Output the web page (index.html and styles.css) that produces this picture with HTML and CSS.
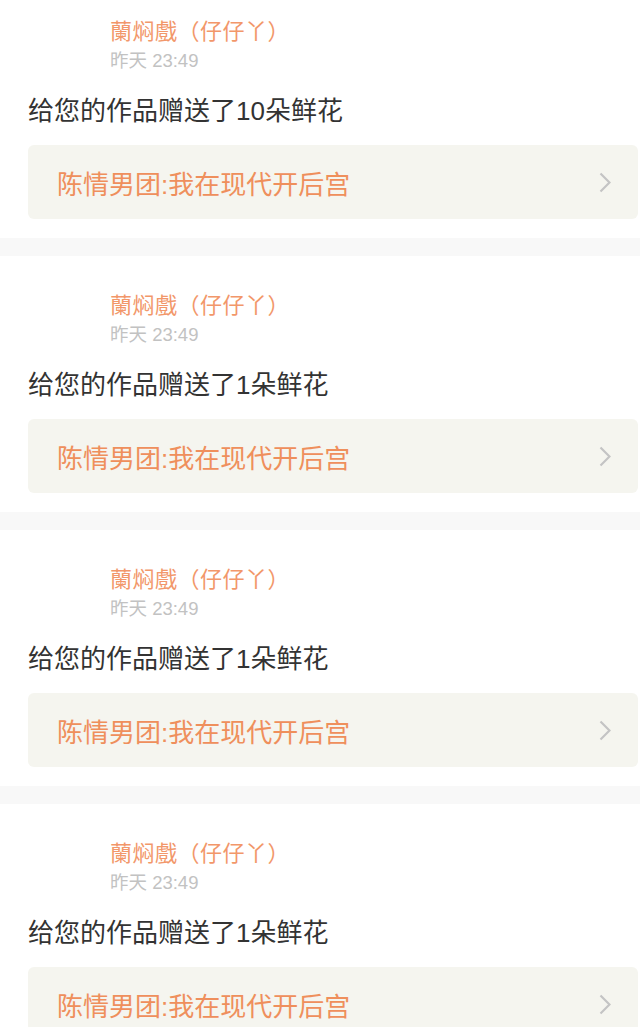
FILE: index.html
```html
<!DOCTYPE html>
<html lang="zh-CN">
<head>
    <meta charset="UTF-8">
    <meta name="viewport" content="width=device-width, initial-scale=1.0">
    <title>消息</title>
    <link rel="stylesheet" href="styles.css">
</head>
<body>
    <main class="list">
        <section class="item">
            <div class="item-head">
                <div class="user-name">蘭焖戲（仔仔丫）</div>
                <div class="time">昨天 23:49</div>
            </div>
            <p class="message">给您的作品赠送了10朵鲜花</p>
            <a class="work" href="#">
                <span class="work-title">陈情男团:我在现代开后宫</span>
                <svg class="arrow" width="12" height="21" viewBox="0 0 12 21"><path d="M1.5 1.5 L10.5 10.5 L1.5 19.5" fill="none" stroke="#c4c4c4" stroke-width="2.2"/></svg>
            </a>
        </section>

        <section class="item">
            <div class="item-head">
                <div class="user-name">蘭焖戲（仔仔丫）</div>
                <div class="time">昨天 23:49</div>
            </div>
            <p class="message">给您的作品赠送了1朵鲜花</p>
            <a class="work" href="#">
                <span class="work-title">陈情男团:我在现代开后宫</span>
                <svg class="arrow" width="12" height="21" viewBox="0 0 12 21"><path d="M1.5 1.5 L10.5 10.5 L1.5 19.5" fill="none" stroke="#c4c4c4" stroke-width="2.2"/></svg>
            </a>
        </section>

        <section class="item">
            <div class="item-head">
                <div class="user-name">蘭焖戲（仔仔丫）</div>
                <div class="time">昨天 23:49</div>
            </div>
            <p class="message">给您的作品赠送了1朵鲜花</p>
            <a class="work" href="#">
                <span class="work-title">陈情男团:我在现代开后宫</span>
                <svg class="arrow" width="12" height="21" viewBox="0 0 12 21"><path d="M1.5 1.5 L10.5 10.5 L1.5 19.5" fill="none" stroke="#c4c4c4" stroke-width="2.2"/></svg>
            </a>
        </section>

        <section class="item">
            <div class="item-head">
                <div class="user-name">蘭焖戲（仔仔丫）</div>
                <div class="time">昨天 23:49</div>
            </div>
            <p class="message">给您的作品赠送了1朵鲜花</p>
            <a class="work" href="#">
                <span class="work-title">陈情男团:我在现代开后宫</span>
                <svg class="arrow" width="12" height="21" viewBox="0 0 12 21"><path d="M1.5 1.5 L10.5 10.5 L1.5 19.5" fill="none" stroke="#c4c4c4" stroke-width="2.2"/></svg>
            </a>
        </section>
    </main>
</body>
</html>
```

FILE: styles.css
```css
body {
    margin: 0;
    padding: 0;
    background-color: #f8f8f8;
    font-family: "Liberation Sans", "Noto Sans CJK SC", sans-serif;
    color: #333;
    overflow: hidden;
}

/* page is scrolled a little, first card is cut at the top */
.list {
    margin-top: -18px;
    display: flex;
    flex-direction: column;
    gap: 18px;
}

.item {
    background-color: #fff;
    padding: 35px 2px 19px 28px;
}

.item-head {
    padding-left: 82px;
}

.user-name {
    font-size: 22px;
    line-height: 30px;
    letter-spacing: 0.5px;
    color: #f2976a;
}

.time {
    margin-top: 2px;
    font-size: 18.5px;
    line-height: 24px;
    color: #c2c2c2;
}

.message {
    margin: 20px 0 0;
    font-size: 26px;
    line-height: 36px;
    color: #333;
}

.work {
    margin-top: 16px;
    height: 74px;
    display: flex;
    align-items: center;
    justify-content: space-between;
    padding: 0 27px 0 29px;
    background-color: #f5f5ef;
    border-radius: 6px;
    text-decoration: none;
}

.work-title {
    font-size: 26px;
    color: #ef8f5c;
}

.arrow {
    display: block;
}
```
